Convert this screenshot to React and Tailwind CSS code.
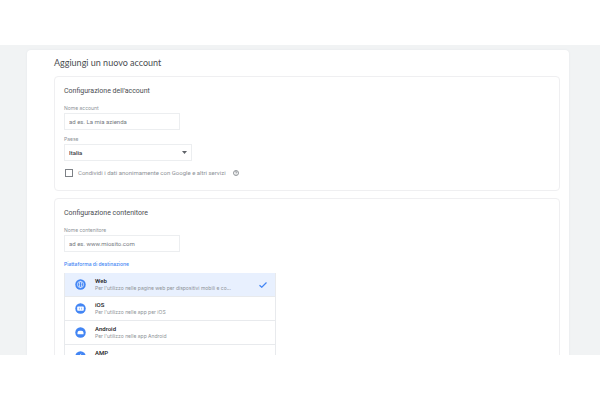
import React, { useState } from "react";

const platforms = [
  {
    id: "web",
    name: "Web",
    description: "Per l'utilizzo nelle pagine web per dispositivi mobili e co...",
  },
  { id: "ios", name: "iOS", description: "Per l'utilizzo nelle app per iOS" },
  {
    id: "android",
    name: "Android",
    description: "Per l'utilizzo nelle app Android",
  },
  { id: "amp", name: "AMP", description: "" },
];

function PlatformIcon({ id }) {
  return (
    <svg viewBox="0 0 20 20" className="size-[11px] shrink-0" aria-hidden="true">
      <circle cx="10" cy="10" r="9.5" fill="#4285f4" />
      {id === "web" && (
        <g fill="none" stroke="#e8f0fe" strokeWidth="1.4">
          <circle cx="10" cy="10" r="5.6" />
          <ellipse cx="10" cy="10" rx="2" ry="5.6" />
        </g>
      )}
      {id === "ios" && (
        <g>
          <rect x="4" y="6.5" width="12" height="7.5" rx="1.5" fill="#fff" />
          <path d="M8 8.5v3.5M12 8.5v3.5" stroke="#4285f4" />
        </g>
      )}
      {id === "android" && (
        <path d="M4.5 13v-2.5a4 3.5 0 0 1 4-3.5h3a4 3.5 0 0 1 4 3.5V13z" fill="#fff" />
      )}
      {id === "amp" && <path d="M11.5 4 6.5 11h3l-1 5 5-7h-3z" fill="#fff" />}
    </svg>
  );
}

function Panel({ title, children }) {
  return (
    <section className="rounded border border-[#efeff1] bg-white px-[9px] pt-2 pb-3">
      <h2 className="text-[7px] leading-3 text-[#4a4d51]">{title}</h2>
      {children}
    </section>
  );
}

function TextField({ id, label, placeholder }) {
  return (
    <div className="mt-[7px]">
      <label
        htmlFor={id}
        className="block font-[Inter,sans-serif] text-[5px] leading-2 text-[#8d9297]"
      >
        {label}
      </label>
      <input
        id={id}
        type="text"
        placeholder={placeholder}
        className="mt-px block h-[17px] w-[116px] border border-[#eceef0] px-1 text-[6px] text-[#3c4043] outline-none placeholder:text-[#75797e]"
      />
    </div>
  );
}

export default function App() {
  const [platform, setPlatform] = useState("web");
  const [share, setShare] = useState(false);

  return (
    <div className="flex h-screen flex-col bg-white py-[45px] font-[Roboto,sans-serif]">
      <div className="min-h-0 flex-1 overflow-hidden bg-[#f1f3f4] pt-[5px] pr-[31px] pl-[27px]">
        <main className="rounded bg-white pt-[7px] pr-[9px] pb-4 pl-[27px] shadow-[0_0_2px_#e3e5e8]">
          <h1 className="font-[Lato,sans-serif] text-[9px] leading-3 text-[#4a4d51]">
            Aggiungi un nuovo account
          </h1>

          <form className="mt-[7px] flex flex-col gap-[7px]">
            <Panel title="Configurazione dell'account">
              <TextField
                id="account"
                label="Nome account"
                placeholder="ad es. La mia azienda"
              />

              <div className="mt-[5px]">
                <label
                  htmlFor="country"
                  className="block font-[Inter,sans-serif] text-[5px] leading-2 text-[#8d9297]"
                >
                  Paese
                </label>
                <div className="relative mt-px w-32">
                  <select
                    id="country"
                    className="block h-[17px] w-full appearance-none border border-[#eceef0] bg-white px-1 text-[6px] font-medium text-[#3c4043] outline-none"
                  >
                    <option>Italia</option>
                  </select>
                  <svg
                    viewBox="0 0 10 6"
                    className="pointer-events-none absolute top-[7px] right-[5px] h-[3px] w-[5px]"
                    aria-hidden="true"
                  >
                    <path d="M0 0h10L5 6z" fill="#5f6368" />
                  </svg>
                </div>
              </div>

              <div className="mt-[6px] flex h-[11px] items-center">
                <input
                  id="share"
                  type="checkbox"
                  checked={share}
                  onChange={(e) => setShare(e.target.checked)}
                  className="ml-px size-2 appearance-none border border-[#7d8186] bg-white checked:bg-[#4285f4]"
                />
                <label
                  htmlFor="share"
                  className="ml-[5px] text-[6px] text-[#8d9297]"
                >
                  Condividi i dati anonimamente con Google e altri servizi
                </label>
                <button type="button" aria-label="Guida" className="ml-[7px]">
                  <svg
                    viewBox="0 0 24 24"
                    className="block size-[6px]"
                    fill="none"
                    stroke="#6f7479"
                    strokeWidth="3"
                    aria-hidden="true"
                  >
                    <circle cx="12" cy="12" r="10" />
                    <path d="M9 9.5a3 3 0 1 1 4.5 2.4c-1 .6-1.5 1.1-1.5 2.6M12 16.5v2" />
                  </svg>
                </button>
              </div>
            </Panel>

            <Panel title="Configurazione contenitore">
              <TextField
                id="container"
                label="Nome contenitore"
                placeholder="ad es. www.miosito.com"
              />

              <h3
                id="platform-title"
                className="mt-2 font-[Inter,sans-serif] text-[5px] leading-2 font-medium text-[#4285f4]"
              >
                Piattaforma di destinazione
              </h3>
              <div
                role="group"
                aria-labelledby="platform-title"
                className="mt-[5px] w-[212px] border-x border-[#e8eaed]"
              >
                {platforms.map((item) => (
                  <button
                    key={item.id}
                    type="button"
                    aria-pressed={platform === item.id}
                    onClick={() => setPlatform(item.id)}
                    className={`flex h-6 w-full items-center border-b border-[#e8eaed] pr-2 pl-[10px] text-left ${
                      platform === item.id ? "bg-[#e8f0fe]" : "bg-white"
                    }`}
                  >
                    <PlatformIcon id={item.id} />
                    <span className="ml-[9px] min-w-0 flex-1">
                      <span className="block text-[6px] leading-2 font-medium text-[#202124]">
                        {item.name}
                      </span>
                      <span className="block min-h-[7px] font-[Inter,sans-serif] text-[5px] leading-[7px] text-[#8d9297]">
                        {item.description}
                      </span>
                    </span>
                    {platform === item.id && (
                      <svg
                        viewBox="0 0 16 12"
                        className="h-[6px] w-2 shrink-0"
                        fill="none"
                        stroke="#4285f4"
                        strokeWidth="2.4"
                        aria-hidden="true"
                      >
                        <path d="M1 6.5 5.5 10.5 15 1" />
                      </svg>
                    )}
                  </button>
                ))}
              </div>
            </Panel>
          </form>
        </main>
      </div>
    </div>
  );
}
